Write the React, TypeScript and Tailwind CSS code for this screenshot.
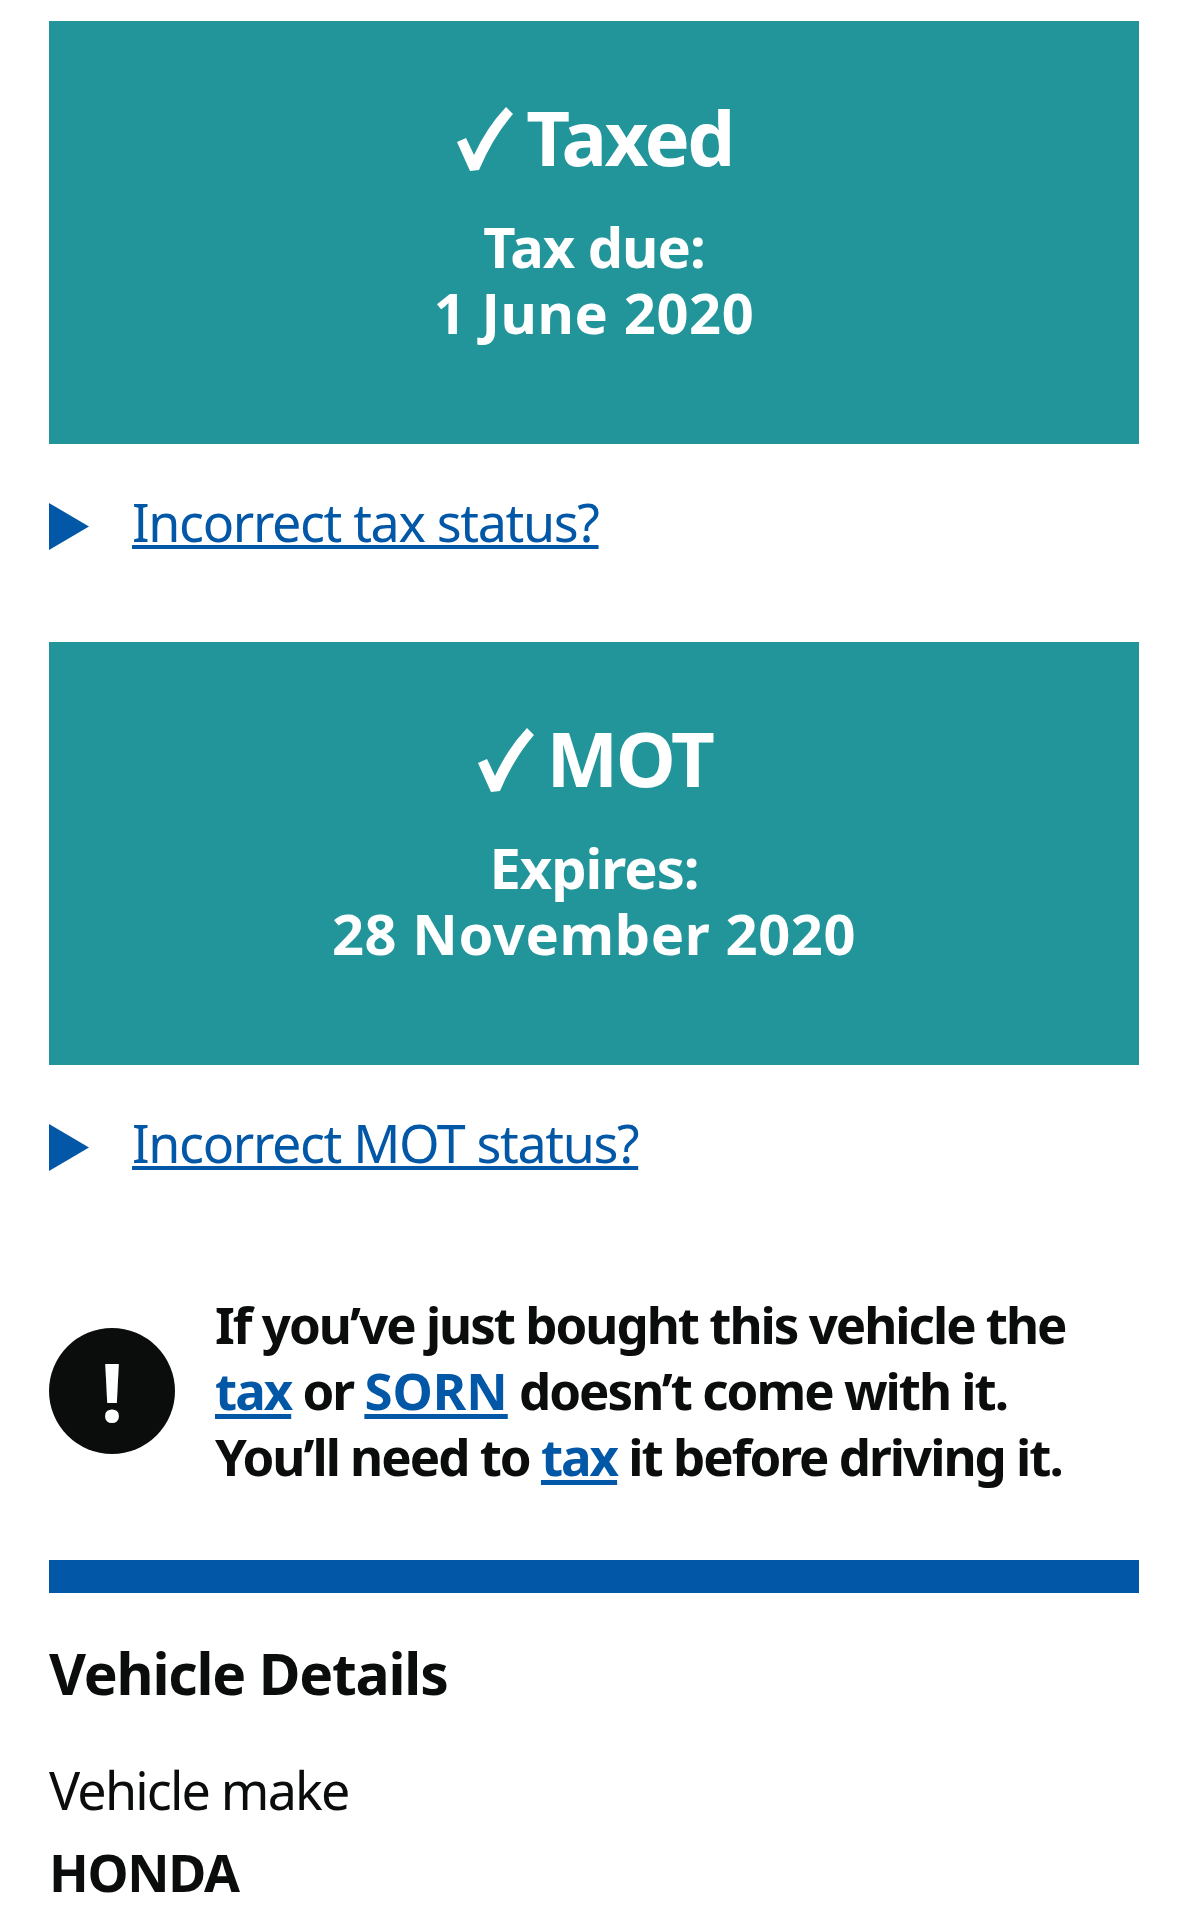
const font = { fontFamily: '"Noto Sans", sans-serif' };

function Check() {
  return (
    <svg viewBox="0 0 60 68" className="w-[60px] h-[68px] shrink-0" fill="#fff">
      <path d="M2 37 L11 33 L19 50 Q32 22 51 2 L58 9 Q38 32 24 65 L15 66 Z" />
    </svg>
  );
}

function Status({ title, label, date }: { title: string; label: string; date: string }) {
  return (
    <div className="h-[423px] bg-[#22959a] text-white flex flex-col items-center pt-[84px] font-bold">
      <div className="flex items-center gap-[11px] h-[68px]">
        <Check />
        <span className="text-[76px] leading-[68px] tracking-[-2.5px] -translate-y-[2px]">{title}</span>
      </div>
      <p className="mt-[40px] text-center text-[56px] leading-[66px]">
        <span className="tracking-[-1px]">{label}</span>
        <br />
        <span className="tracking-[0.6px]">{date}</span>
      </p>
    </div>
  );
}

function Disclosure({ text }: { text: string }) {
  return (
    <div className="flex items-center h-[66px] mt-[44px] gap-[43px]">
      <svg viewBox="0 0 40 47" className="w-[40px] h-[47px] shrink-0 mt-[10px]" fill="#0257a6">
        <path d="M0 0 L40 23.5 L0 47 Z" />
      </svg>
      <a className="text-[52px] leading-[66px] tracking-[-1.35px] text-[#0257a6] underline decoration-[4px] underline-offset-[3px] translate-y-[1px]">{text}</a>
    </div>
  );
}

export default function App() {
  return (
    <div className="w-[1188px] h-[1920px] overflow-hidden bg-white text-[#0b0c0c] px-[49px] pt-[21px]" style={font}>
      <Status title="Taxed" label="Tax due:" date="1 June 2020" />
      <Disclosure text="Incorrect tax status?" />
      <div className="mt-[88px]">
        <Status title="MOT" label="Expires:" date="28 November 2020" />
      </div>
      <Disclosure text="Incorrect MOT status?" />
      <div className="flex items-center mt-[116px] gap-[40px]">
        <div className="w-[126px] h-[126px] translate-y-[1px] rounded-full bg-[#0b0c0c] text-white flex items-center justify-center text-[80px] font-bold shrink-0">!</div>
        <p className="text-[51px] leading-[66px] font-bold tracking-[-2px] whitespace-nowrap">
          If you’ve just bought this vehicle the<br />
          <a className="text-[#0257a6] underline decoration-[5px] underline-offset-[4px]">tax</a> or{' '}
          <a className="text-[#0257a6] tracking-[0px] underline decoration-[5px] underline-offset-[4px]">SORN</a> doesn’t come with it.<br />
          You’ll need to <a className="text-[#0257a6] underline decoration-[5px] underline-offset-[4px]">tax</a> it before driving it.
        </p>
      </div>
      <div className="h-[33px] bg-[#0257a6] mt-[71px]" />
      <h2 className="text-[57px] leading-[66px] tracking-[-1.2px] font-bold mt-[47px]">Vehicle Details</h2>
      <div className="text-[52px] leading-[66px] tracking-[-1.8px] mt-[51px]">Vehicle make</div>
      <div className="text-[52px] leading-[66px] font-bold mt-[16px] tracking-[-1.3px]">HONDA</div>
    </div>
  );
}
